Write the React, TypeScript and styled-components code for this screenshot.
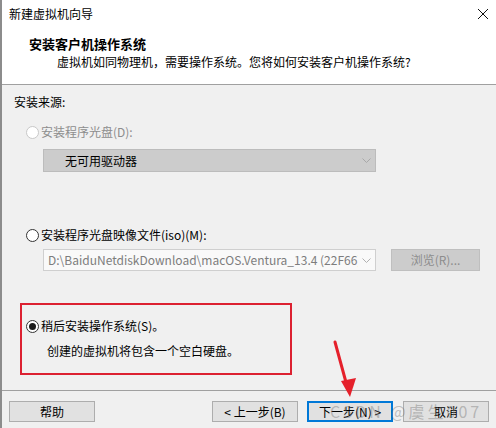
import React from "react";
import styled, { createGlobalStyle } from "styled-components";

const Global = createGlobalStyle`
  html, body { margin: 0; padding: 0; background: #f0f0f0; }
  * { box-sizing: border-box; }
`;

const FONT = `"Noto Sans CJK SC", "Noto Sans", "Liberation Sans", sans-serif`;

const Window = styled.div`
  position: relative;
  width: 496px;
  height: 428px;
  overflow: hidden;
  background: #f0f0f0;
  border-left: 2px solid #8c8c8c;
  display: flex;
  flex-direction: column;
  font-family: ${FONT};
  font-size: 12px;
  color: #000;
`;

const TitleBar = styled.div`
  height: 28px;
  background: #fff;
  display: flex;
  align-items: center;
  justify-content: space-between;
  padding: 0 7px 0 7px;
  line-height: 16px;
`;

const CloseBtn = styled.div`
  width: 12px;
  height: 12px;
  display: flex;
  align-items: center;
  justify-content: center;
`;

const Header = styled.div`
  height: 57px;
  background: #fff;
  padding: 7px 0 0 27px;
  border-bottom: 1px solid #a0a0a0;
  display: flex;
  flex-direction: column;
`;

const HeaderTitle = styled.div`
  font-weight: 700;
  font-size: 13px;
  line-height: 18px;
`;

const HeaderSub = styled.div`
  margin: 1px 0 0 28px;
  line-height: 16px;
`;

const Body = styled.div`
  flex: 1;
  padding: 9px 0 0 12px;
  display: flex;
  flex-direction: column;
  align-items: flex-start;
`;

const Label = styled.div`
  line-height: 16px;
`;

const RadioRow = styled.div<{ $mt: number; $ml: number; $disabled?: boolean }>`
  margin-top: ${(p) => p.$mt}px;
  margin-left: ${(p) => p.$ml}px;
  display: flex;
  align-items: center;
  gap: 2px;
  height: 16px;
  line-height: 16px;
  color: ${(p) => (p.$disabled ? "#8d8d8d" : "#000")};
`;

const RadioCircle = styled.span<{ $checked?: boolean; $disabled?: boolean }>`
  width: 13px;
  height: 13px;
  border-radius: 50%;
  border: 1px solid ${(p) => (p.$disabled ? "#c8c8c8" : "#333")};
  background: #fff;
  display: flex;
  align-items: center;
  justify-content: center;
  &::after {
    content: "";
    display: ${(p) => (p.$checked ? "block" : "none")};
    width: 7px;
    height: 7px;
    border-radius: 50%;
    background: #1a1a1a;
  }
`;

const Select = styled.div<{ $mt: number; $h: number; $disabledBox?: boolean }>`
  margin-top: ${(p) => p.$mt}px;
  margin-left: 29px;
  width: 333px;
  height: ${(p) => p.$h}px;
  display: flex;
  align-items: center;
  justify-content: space-between;
  background: ${(p) => (p.$disabledBox ? "#cccccc" : "#f9f9f9")};
  border: 1px solid ${(p) => (p.$disabledBox ? "#bcbcbc" : "#cfcfcf")};
  padding: 0 3px 0 0;
  overflow: hidden;
`;

const SelectText = styled.span<{ $pl: number; $grey?: boolean }>`
  padding-left: ${(p) => p.$pl}px;
  flex: 1;
  white-space: nowrap;
  overflow: hidden;
  line-height: 16px;
  color: ${(p) => (p.$grey ? "#7d7d7d" : "#000")};
`;

const Chevron = styled.span`
  width: 14px;
  display: flex;
  justify-content: center;
  padding-left: 2px;
`;

const FileRow = styled.div`
  margin-top: 6px;
  display: flex;
  align-items: center;
  gap: 15px;
`;

const Browse = styled.div`
  width: 89px;
  height: 22px;
  background: #cccccc;
  border: 1px solid #bfbfbf;
  display: flex;
  align-items: center;
  justify-content: center;
  color: #8d8d8d;
  line-height: 16px;
`;

const Highlight = styled.div`
  margin-top: 32px;
  margin-left: 6px;
  width: 272px;
  height: 72px;
  border: 2px solid #dc2131;
  padding: 13px 0 0 4px;
  display: flex;
  flex-direction: column;
`;

const Desc = styled.div`
  margin: 9px 0 0 21px;
  line-height: 16px;
`;

const Footer = styled.div`
  height: 38px;
  border-top: 1px solid #a0a0a0;
  display: flex;
  align-items: flex-start;
  padding: 10px 7px 0 7px;
`;

const Button = styled.div<{ $primary?: boolean; $ml?: number }>`
  width: 86px;
  height: 21px;
  margin-left: ${(p) => p.$ml ?? 0}px;
  background: #e1e1e1;
  border: ${(p) => (p.$primary ? "2px solid #0078d7" : "1px solid #adadad")};
  display: flex;
  align-items: center;
  justify-content: center;
  line-height: 16px;
`;

const Spacer = styled.div`
  flex: 1;
`;

const ArrowOverlay = styled.svg`
  position: absolute;
  left: 0;
  top: 0;
  pointer-events: none;
`;

const Watermark = styled.div`
  position: absolute;
  left: 328px;
  top: 401px;
  font-family: ${FONT};
  font-size: 16px;
  line-height: 20px;
  letter-spacing: 3px;
  color: rgba(110, 110, 110, 0.4);
  white-space: nowrap;
  pointer-events: none;
`;

const ChevronIcon = ({ color }: { color: string }) => (
  <svg width="9" height="5" viewBox="0 0 9 5">
    <path d="M0.5 0.5 L4.5 4.5 L8.5 0.5" fill="none" stroke={color} strokeWidth="1" />
  </svg>
);

export default function App() {
  return (
    <>
      <Global />
      <Window>
        <TitleBar>
          <span>新建虚拟机向导</span>
          <CloseBtn>
            <svg width="12" height="12" viewBox="0 0 12 12">
              <path d="M1 1 L11 11 M11 1 L1 11" stroke="#111" strokeWidth="1" />
            </svg>
          </CloseBtn>
        </TitleBar>
        <Header>
          <HeaderTitle>安装客户机操作系统</HeaderTitle>
          <HeaderSub>虚拟机如同物理机，需要操作系统。您将如何安装客户机操作系统?</HeaderSub>
        </Header>
        <Body>
          <Label>安装来源:</Label>
          <RadioRow $mt={14} $ml={12} $disabled>
            <RadioCircle $disabled />
            <span>安装程序光盘(D):</span>
          </RadioRow>
          <Select $mt={9} $h={23} $disabledBox>
            <SelectText $pl={21}>无可用驱动器</SelectText>
            <Chevron>
              <ChevronIcon color="#a8a8a8" />
            </Chevron>
          </Select>
          <RadioRow $mt={55} $ml={12}>
            <RadioCircle />
            <span>安装程序光盘映像文件(iso)(M):</span>
          </RadioRow>
          <FileRow>
            <Select $mt={0} $h={22}>
              <SelectText $pl={4} $grey>
                D:\BaiduNetdiskDownload\macOS.Ventura_13.4 (22F66).iso
              </SelectText>
              <Chevron>
                <ChevronIcon color="#b0b0b0" />
              </Chevron>
            </Select>
            <Browse>浏览(R)...</Browse>
          </FileRow>
          <Highlight>
            <RadioRow $mt={0} $ml={0}>
              <RadioCircle $checked />
              <span>稍后安装操作系统(S)。</span>
            </RadioRow>
            <Desc>创建的虚拟机将包含一个空白硬盘。</Desc>
          </Highlight>
        </Body>
        <Footer>
          <Button>帮助</Button>
          <Spacer />
          <Button>&lt; 上一步(B)</Button>
          <Button $primary $ml={9}>
            下一步(N) &gt;
          </Button>
          <Button $ml={10}>取消</Button>
        </Footer>
        <ArrowOverlay width="496" height="428" viewBox="0 0 496 428">
          <path d="M333 342 L345 386" stroke="#e5202b" strokeWidth="3" strokeLinecap="round" />
          <path d="M348 397 L339 381 L354 378 Z" fill="#e5202b" />
        </ArrowOverlay>
        <Watermark>CSDN @虞生007</Watermark>
      </Window>
    </>
  );
}
